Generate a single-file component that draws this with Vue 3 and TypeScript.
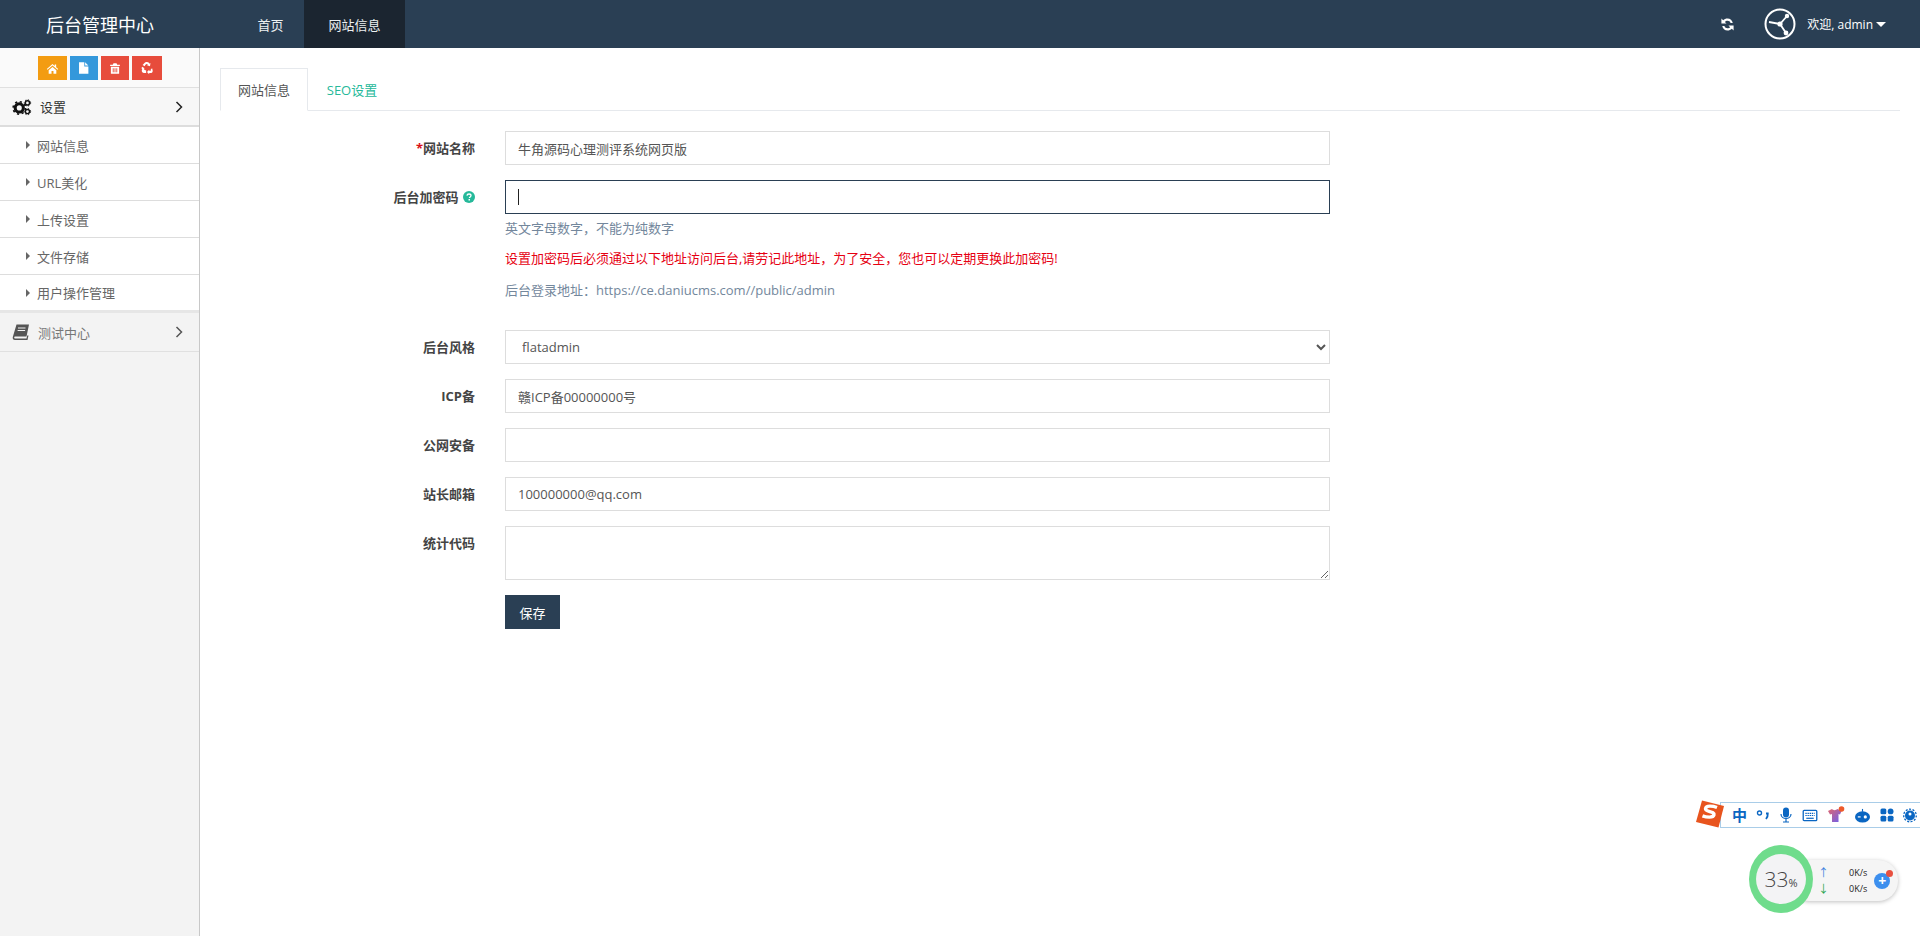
<script setup lang="ts">
interface SubItem {
  label: string
}

const subMenu: SubItem[] = [
  { label: '网站信息' },
  { label: 'URL美化' },
  { label: '上传设置' },
  { label: '文件存储' },
  { label: '用户操作管理' },
]

const shortcuts = ['orange', 'blue', 'red', 'red wide']
</script>

<template>
  <div class="page">
    <header class="topbar">
      <div class="brand">后台管理中心</div>
      <nav class="nav">
        <a class="nav-item">首页</a>
        <a class="nav-item active">网站信息</a>
      </nav>
      <div class="top-right">
        <svg class="refresh" viewBox="0 0 16 16" width="15" height="15">
          <path fill="#fff" d="M13.6 6.4h-2.3C10.8 4.9 9.500 4 8 4 6.900 4 5.900 4.500 5.200 5.200L7 7H1.500V1.500l1.900 1.900C4.600 2.200 6.200 1.500 8 1.500c2.900 0 5.200 2 5.600 4.900zM2.400 9.600h2.300C5.200 11.100 6.500 12 8 12c1.100 0 2.100-.5 2.800-1.200L9 9h5.500v5.500l-1.900-1.900c-1.200 1.200-2.800 1.900-4.600 1.900-2.900 0-5.200-2-5.600-4.900z" />
        </svg>
        <svg class="avatar" viewBox="0 0 32 32" width="32" height="32">
          <circle cx="16" cy="16" r="14.500" fill="none" stroke="#fff" stroke-width="2" />
          <path d="M5 14l11 2 7-8M16 16l6 9" fill="none" stroke="#fff" stroke-width="1.800" />
          <circle cx="16" cy="16" r="2.600" fill="#fff" />
          <circle cx="22" cy="25" r="2.400" fill="#fff" />
          <circle cx="23" cy="8" r="2.200" fill="#fff" />
        </svg>
        <span class="welcome">欢迎, admin</span>
        <i class="caret"></i>
      </div>
    </header>

    <div class="body">
      <aside class="sidebar">
        <div class="shortcuts">
          <button v-for="(s, i) in shortcuts" :key="i" type="button" class="shortcut" :class="s">
            <svg v-if="i === 0" viewBox="0 0 16 16" width="13" height="13">
              <path fill="#fff" d="M8 2.500L1 8.500l.8 1L8 4.300l6.200 5.200.8-1-2.500-2.100V3h-1.800v1.900zM3.300 10v4.500h3.500v-3.300h2.400v3.300h3.500V10L8 6z" />
            </svg>
            <svg v-else-if="i === 1" viewBox="0 0 16 16" width="13" height="14">
              <path fill="#fff" d="M2.500 1h6.500v5h5v9h-11.500zM10 1l4 4h-4z" />
            </svg>
            <svg v-else-if="i === 2" viewBox="0 0 16 16" width="12" height="13">
              <path fill="#fff" d="M6 1h4l1 2h3.500v1.500h-13V3H5zM2.500 5.500h11V15h-11zM5 7.500V13h1.200V7.500zM7.400 7.500V13h1.200V7.500zM9.800 7.500V13H11V7.500z" fill-rule="evenodd" />
            </svg>
            <svg v-else viewBox="0 0 16 16" width="14" height="14">
              <path fill="#fff" d="M8 1c1.500 0 2.300.8 3 2l1-.6-.6 3.600-3.400-1.200 1-.6C8.500 3.200 7.200 3 6.500 4L5.200 6 3 4.700 4.800 2.500C5.500 1.500 6.700 1 8 1zM2.300 6.500l3 1.800-1 .6c.4.900 1 1.800 2.700 1.800v3H4.500C3 13.700 2 12.500 2 11.200c0-.7.300-1.400.7-2l-1-.6zM14 8.500l.5 2.500c.2 1.500-1 2.700-2.500 2.700h-1.500v1.300L8 12.500 10.500 10v1.200h1.300c.9 0 1-1 .4-2z" />
            </svg>
          </button>
        </div>

        <div class="menu-head open">
          <svg class="menu-icon" viewBox="0 0 22 18" width="20" height="18">
            <circle cx="8" cy="10" r="4.500" fill="none" stroke="#111" stroke-width="3.400" />
            <circle cx="8" cy="10" r="6.800" fill="none" stroke="#111" stroke-width="1.800" stroke-dasharray="2.400 2.900" />
            <circle cx="17" cy="4.500" r="2.300" fill="none" stroke="#111" stroke-width="1.600" />
            <circle cx="17" cy="4.500" r="3.500" fill="none" stroke="#111" stroke-width="1" stroke-dasharray="1.500 1.800" />
            <circle cx="17" cy="14" r="2.300" fill="none" stroke="#111" stroke-width="1.600" />
            <circle cx="17" cy="14" r="3.500" fill="none" stroke="#111" stroke-width="1" stroke-dasharray="1.500 1.800" />
          </svg>
          <span class="menu-title">设置</span>
          <svg class="chevron" viewBox="0 0 8 12" width="8" height="12">
            <path d="M1.500 1l5 5-5 5" fill="none" stroke="#222" stroke-width="1.500" />
          </svg>
        </div>
        <ul class="sub-menu">
          <li v-for="item in subMenu" :key="item.label" class="sub-item">
            <i class="tri"></i>{{ item.label }}
          </li>
        </ul>
        <div class="menu-head">
          <svg class="menu-icon" viewBox="0 0 18 16" width="18" height="16">
            <path fill="#555" d="M4.500 0.500H17L14.500 12.500H3.500c-1 0-1.300.5-1.300 1s.4 1 1.300 1h11l.7-3h1.300L15.500 16H3C1 16 .4 14.500 .8 13zM6 3.500v1h7.500v-1zM5.600 6v1h7.500V6z" fill-rule="evenodd" />
          </svg>
          <span class="menu-title muted">测试中心</span>
          <svg class="chevron" viewBox="0 0 8 12" width="8" height="12">
            <path d="M1.500 1l5 5-5 5" fill="none" stroke="#555" stroke-width="1.500" />
          </svg>
        </div>
      </aside>

      <main class="main">
        <div class="tabs">
          <a class="tab active">网站信息</a>
          <a class="tab">SEO设置</a>
        </div>

        <form class="form">
          <div class="row">
            <label class="label"><span class="star">*</span>网站名称</label>
            <div class="field"><input class="control" value="牛角源码心理测评系统网页版" /></div>
          </div>
          <div class="row">
            <label class="label">后台加密码
              <svg class="help" viewBox="0 0 12 12" width="12" height="12">
                <circle cx="6" cy="6" r="6" fill="#26b99a" />
                <path d="M4 4.600C4.100 3.500 5 3 6 3c1.200 0 2 .7 2 1.600 0 1.400-1.600 1.300-1.600 2.500" fill="none" stroke="#fff" stroke-width="1.300" />
                <rect x="5.500" y="8" width="1.500" height="1.500" fill="#fff" />
              </svg>
            </label>
            <div class="field">
              <div class="focus-wrap">
                <input class="control focus" />
                <i class="cursor"></i>
              </div>
              <p class="hint first">英文字母数字，不能为纯数字</p>
              <p class="warn">设置加密码后必须通过以下地址访问后台,请劳记此地址，为了安全，您也可以定期更换此加密码!</p>
              <p class="hint url">后台登录地址：https://ce.daniucms.com//public/admin</p>
            </div>
          </div>
          <div class="row">
            <label class="label">后台风格</label>
            <div class="field">
              <select class="control select"><option>flatadmin</option></select>
            </div>
          </div>
          <div class="row">
            <label class="label">ICP备</label>
            <div class="field"><input class="control" value="赣ICP备00000000号" /></div>
          </div>
          <div class="row">
            <label class="label">公网安备</label>
            <div class="field"><input class="control" /></div>
          </div>
          <div class="row">
            <label class="label">站长邮箱</label>
            <div class="field"><input class="control" value="100000000@qq.com" /></div>
          </div>
          <div class="row">
            <label class="label">统计代码</label>
            <div class="field"><textarea class="control area"></textarea></div>
          </div>
          <div class="row">
            <div class="label"></div>
            <div class="field"><button type="button" class="save">保存</button></div>
          </div>
        </form>
      </main>
    </div>

    <!-- 输入法工具条 -->
    <div class="ime">
      <svg class="ime-logo" viewBox="0 0 30 30" width="30" height="30">
        <path fill="#e8541e" d="M7 1.500L29 7l-5.500 21.500L1 23z" />
        <path d="M22 8.500c-4-1.500-11-2.500-11.500 1.300-.4 3.500 9.500 2.200 8.500 6-.8 3.300-7.500 2.500-11.500 1" fill="none" stroke="#fff" stroke-width="3.400" />
      </svg>
      <span class="ime-zh">中</span>
      <svg viewBox="0 0 14 14" width="14" height="14" class="ime-i">
        <circle cx="3.500" cy="5" r="2" fill="none" stroke="#0a66c2" stroke-width="1.400" />
        <path d="M10 5.500h1.800c.2 2.500-.6 4-1.800 5.500" fill="none" stroke="#0a66c2" stroke-width="1.800" />
      </svg>
      <svg viewBox="0 0 14 16" width="14" height="16" class="ime-i">
        <rect x="4" y="0.500" width="6" height="10" rx="3" fill="#0a66c2" />
        <path d="M2 7c0 6 10 6 10 0M7 12v2.500M4 15h6" fill="none" stroke="#0a66c2" stroke-width="1.200" />
      </svg>
      <svg viewBox="0 0 16 14" width="16" height="13" class="ime-i">
        <rect x="0.700" y="1.500" width="14.600" height="11" rx="1" fill="none" stroke="#0a66c2" stroke-width="1.400" />
        <path d="M3 4.700h10M3 7h10" stroke="#0a66c2" stroke-width="1.300" stroke-dasharray="1.500 .8" />
        <path d="M4 10h8" stroke="#0a66c2" stroke-width="1.300" />
      </svg>
      <svg viewBox="0 0 18 18" width="18" height="18" class="ime-i">
        <defs>
          <linearGradient id="shirt" x1="0" y1="0" x2="1" y2="1">
            <stop offset="0" stop-color="#e0656e" />
            <stop offset="1" stop-color="#6a5ff0" />
          </linearGradient>
        </defs>
        <path fill="url(#shirt)" d="M1 5l4-2c1 1.500 4 1.500 5.500 0l4 2-1.500 3.500-1.500-.5v8H5V8l-2 .5z" />
        <circle cx="14.500" cy="3" r="2.800" fill="#ee5a2a" />
      </svg>
      <svg viewBox="0 0 18 16" width="17" height="15" class="ime-i">
        <ellipse cx="9" cy="9.500" rx="8" ry="6" fill="#0a66c2" />
        <path d="M9 1v3" stroke="#0a66c2" stroke-width="1.200" />
        <circle cx="12" cy="9.500" r="1.700" fill="#fff" />
        <path d="M4 9.500h3" stroke="#fff" stroke-width="1.300" />
      </svg>
      <svg viewBox="0 0 14 14" width="14" height="14" class="ime-i">
        <rect x="0.500" y="0.500" width="5.800" height="5.800" rx="1.500" fill="#0a66c2" />
        <rect x="7.700" y="0.500" width="5.800" height="5.800" rx="2.900" fill="#0a66c2" />
        <rect x="0.500" y="7.700" width="5.800" height="5.800" rx="1.500" fill="#0a66c2" />
        <rect x="7.700" y="7.700" width="5.800" height="5.800" rx="1.500" fill="#0a66c2" />
      </svg>
      <svg viewBox="0 0 14 15" width="14" height="15" class="ime-i">
        <circle cx="7" cy="7.500" r="5" fill="#0a66c2" />
        <circle cx="7" cy="7.500" r="6.300" fill="none" stroke="#0a66c2" stroke-width="1.300" stroke-dasharray="2 1.500" />
        <circle cx="7" cy="6" r="1.500" fill="#fff" />
      </svg>
    </div>

    <!-- 加速球 -->
    <div class="speed">
      <div class="speed-pill">
        <div class="speed-col">
          <span class="up">↑</span>
          <span class="down">↓</span>
        </div>
        <div class="speed-val">
          <span>0K/s</span>
          <span>0K/s</span>
        </div>
        <div class="plus">
          <span>+</span>
          <i class="dot"></i>
        </div>
      </div>
      <div class="ball"><div class="ball-in"><b>33</b><small>%</small></div></div>
    </div>
  </div>
</template>

<style>
html,
body {
  margin: 0;
  background: #fff;
}
</style>

<style scoped>
.page {
  height: 936px;
  overflow: hidden;
  position: relative;
  font-family: "Open Sans", "Noto Sans CJK SC", sans-serif;
  font-size: 13px;
  color: #555;
}

.topbar {
  align-items: center;
  background: #2a3f54;
  color: #fff;
  display: flex;
  height: 48px;
}

.brand {
  font-size: 18px;
  padding-left: 46px;
  width: 191px;
}

.nav {
  display: flex;
  height: 100%;
}

.nav-item {
  align-items: center;
  display: flex;
  justify-content: center;
  width: 67px;
  color: #ecf0f1;
}

.nav-item:first-child {
  width: 67px;
}

.nav-item.active {
  background: #1b2530;
  width: 101px;
}

.top-right {
  align-items: center;
  display: flex;
  margin-left: auto;
  padding-right: 34px;
}

.refresh {
  margin-right: 29px;
}

.avatar {
  margin-right: 11px;
}

.welcome {
  font-size: 12px;
}

.caret {
  border-left: 5px solid transparent;
  border-right: 5px solid transparent;
  border-top: 5px solid #fff;
  margin-left: 3px;
}

.body {
  display: flex;
  height: 888px;
}

.sidebar {
  background: #f3f3f3;
  border-right: 1px solid #c8c8c8;
  box-sizing: border-box;
  flex: none;
  width: 200px;
}

.shortcuts {
  align-items: flex-start;
  background: #fafafa;
  border-bottom: 1px solid #e0e0e0;
  box-sizing: border-box;
  display: flex;
  gap: 3px;
  height: 40px;
  justify-content: center;
  padding: 8px 0 0;
}

.shortcut {
  align-items: center;
  border: 0;
  display: flex;
  height: 24px;
  justify-content: center;
  padding: 0;
  width: 28px;
}

.orange {
  background: #f39c12;
  width: 29px;
}

.blue {
  background: #3498db;
}

.red {
  background: #e74c3c;
}

.wide {
  width: 30px;
}

.menu-head {
  align-items: center;
  border-bottom: 1px solid #e0e0e0;
  box-sizing: border-box;
  display: flex;
  height: 39px;
  padding: 0 16px 0 12px;
}

.menu-head.open {
  background: #f7f7f7;
  border-bottom: 2px solid #ddd;
}

.menu-icon {
  flex: none;
  margin-right: 8px;
}

.menu-title {
  color: #333;
  flex: 1;
}

.menu-title.muted {
  color: #777;
}

.sub-menu {
  list-style: none;
  margin: 0;
  padding: 0;
}

.sub-item {
  align-items: center;
  background: #fff;
  border-bottom: 1px solid #ddd;
  box-sizing: border-box;
  display: flex;
  height: 37px;
  padding-left: 26px;
  color: #666;
}

.sub-item:last-child {
  border-bottom: 3px solid #e6e6e6;
  height: 38px;
}

.tri {
  border-bottom: 4px solid transparent;
  border-left: 4px solid #666;
  border-top: 4px solid transparent;
  margin-right: 7px;
}

.main {
  flex: 1;
  min-width: 0;
  padding: 20px 20px 0;
}

.tabs {
  border-bottom: 1px solid #e6e9ed;
  display: flex;
  height: 42px;
}

.tab {
  align-items: center;
  box-sizing: border-box;
  color: #26b99a;
  display: flex;
  height: 42px;
  justify-content: center;
  width: 88px;
}

.tab.active {
  background: #fff;
  border: 1px solid #e6e9ed;
  border-bottom-color: #fff;
  color: #555;
  height: 43px;
}

.form {
  padding-top: 20px;
}

.row {
  display: flex;
  margin-bottom: 15px;
}

.label {
  color: #444;
  flex: none;
  font-weight: 700;
  margin-right: 30px;
  padding-top: 7px;
  text-align: right;
  width: 255px;
}

.star {
  color: #d9101a;
}

.help {
  margin-left: 1px;
  vertical-align: -1px;
}

.field {
  width: 825px;
}

.control {
  background: #fff;
  border: 1px solid #ddd;
  box-sizing: border-box;
  color: #555;
  display: block;
  font: inherit;
  height: 34px;
  outline: none;
  padding: 0 12px;
  width: 100%;
}

.focus-wrap {
  position: relative;
}

.control.focus {
  border-color: #2a3f54;
}

.cursor {
  background: #222;
  height: 16px;
  left: 13px;
  position: absolute;
  top: 9px;
  width: 1px;
}

.select {
  padding-left: 12px;
}

.area {
  height: 54px;
  resize: vertical;
}

.hint {
  color: #73879c;
  margin: 5px 0 0;
  line-height: 18px;
}

.hint.first {
  margin-top: 5px;
}

.warn {
  color: #e60012;
  line-height: 18px;
  margin: 12px 0 0;
}

.hint.url {
  margin: 14px 0 16px;
}

.save {
  background: #2a3f54;
  border: 0;
  color: #fff;
  font: inherit;
  height: 34px;
  padding: 0;
  width: 55px;
}

.ime {
  align-items: center;
  background: #fff;
  border: 1px solid #a9cde8;
  border-right: 0;
  box-sizing: border-box;
  display: flex;
  gap: 9px;
  height: 26px;
  left: 1720px;
  padding-left: 11px;
  position: absolute;
  top: 802px;
  width: 200px;
}

.ime-logo {
  left: -26px;
  position: absolute;
  top: -4px;
}

.ime-zh {
  color: #0a66c2;
  font-size: 15px;
  font-weight: 700;
  line-height: 1;
}

.ime-i {
  flex: none;
}

.speed {
  height: 70px;
  left: 1750px;
  position: absolute;
  top: 845px;
  width: 150px;
}

.speed-pill {
  align-items: center;
  background: #f5f5f5;
  border-radius: 20px;
  box-shadow: 0 1px 4px rgba(0, 0, 0, 0.25);
  box-sizing: border-box;
  display: flex;
  height: 41px;
  left: 40px;
  padding-left: 28px;
  position: absolute;
  top: 15px;
  width: 108px;
}

.speed-col,
.speed-val {
  display: flex;
  flex-direction: column;
  font-size: 9px;
  line-height: 16px;
}

.speed-col {
  font-size: 11px;
}

.speed-val {
  color: #222;
  margin-left: 20px;
}

.up {
  color: #3b82e0;
}

.down {
  color: #29a550;
}

.plus {
  align-items: center;
  background: #3d8fee;
  border-radius: 50%;
  color: #fff;
  display: flex;
  font-size: 14px;
  font-weight: 700;
  height: 16px;
  justify-content: center;
  margin-left: 7px;
  position: relative;
  width: 16px;
}

.dot {
  background: #e8503f;
  border-radius: 50%;
  height: 7px;
  position: absolute;
  right: -3px;
  top: -3px;
  width: 7px;
}

.ball {
  align-items: center;
  background: #6fdc8c;
  border-radius: 50%;
  display: flex;
  height: 68px;
  justify-content: center;
  left: -1px;
  position: absolute;
  top: 0;
  width: 64px;
}

.ball-in {
  align-items: baseline;
  background: #f3f3f5;
  border-radius: 50%;
  color: #444;
  display: flex;
  height: 50px;
  justify-content: center;
  line-height: 50px;
  width: 50px;
}

.ball-in b {
  font-size: 21px;
  font-weight: 300;
}

.ball-in small {
  font-size: 11px;
}
</style>
